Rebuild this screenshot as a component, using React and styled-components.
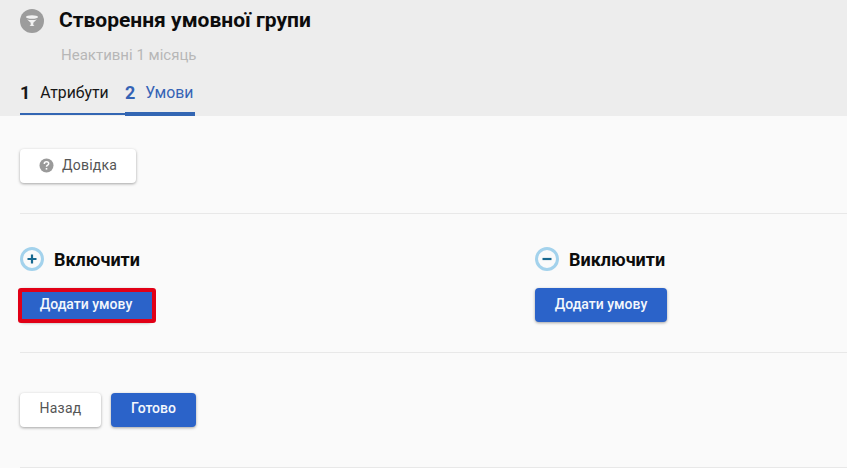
import React from 'react';
import styled, { createGlobalStyle } from 'styled-components';

const Global = createGlobalStyle`
  html, body {
    margin: 0;
    padding: 0;
    background: #fafafa;
    font-family: Roboto, "Liberation Sans", sans-serif;
  }
`;

const Page = styled.div`
  width: 847px;
  height: 468px;
  overflow: hidden;
  background: #fafafa;
`;

const Header = styled.header`
  height: 116px;
  box-sizing: border-box;
  padding: 7px 20px 0;
  background: #ededed;
`;

const TitleRow = styled.div`
  display: flex;
  align-items: center;
  height: 26px;
  gap: 15px;
`;

const RoundIcon = styled.span`
  width: 24px;
  height: 24px;
  margin-top: 1px;
  border-radius: 50%;
  background: #9c9c9c;
  display: flex;
  align-items: center;
  justify-content: center;
`;

const Title = styled.h1`
  margin: 0;
  font-size: 21px;
  line-height: 26px;
  font-weight: 700;
  color: #0c0c0c;
`;

const Subtitle = styled.div`
  margin: 14px 0 0 41px;
  font-size: 15px;
  line-height: 17px;
  color: #b7b7b7;
`;

const Tabs = styled.nav`
  display: flex;
  align-items: flex-start;
  margin-top: 12px;
`;

const Tab = styled.div`
  display: flex;
  align-items: center;
  box-sizing: border-box;
  height: ${p => (p.$active ? '40px' : '39px')};
  padding-bottom: ${p => (p.$active ? '4px' : '5px')};
  width: ${p => (p.$active ? '70px' : '105px')};
  gap: 10px;
  color: ${p => (p.$active ? '#3563b5' : '#171717')};
  border-bottom: ${p => (p.$active ? '4px' : '2px')} solid #3366b3;
`;

const TabNumber = styled.span`
  font-size: 18px;
  font-weight: 700;
`;

const TabLabel = styled.span`
  font-size: 15.8px;
`;

const Content = styled.main`
  padding: 33px 0 0 20px;
`;

const Button = styled.button`
  box-sizing: border-box;
  height: 34px;
  width: ${p => p.$width}px;
  padding: 0 0 2px;
  border: none;
  border-radius: 4px;
  display: inline-flex;
  align-items: center;
  justify-content: center;
  gap: 8px;
  font-family: inherit;
  font-size: 14px;
  font-weight: ${p => (p.$primary ? 500 : 400)};
  letter-spacing: ${p => (p.$primary ? '0' : '0.2px')};
  background: ${p => (p.$primary ? '#2b63c9' : '#ffffff')};
  color: ${p => (p.$primary ? '#f4f7fc' : '#555555')};
  box-shadow: 0 1px 3px rgba(0, 0, 0, 0.35);
`;

const Divider = styled.hr`
  margin: ${p => p.$top}px 0 0;
  border: none;
  border-top: 1px solid #e8e8e8;
`;

const Conditions = styled.section`
  display: grid;
  grid-template-columns: 515px 1fr;
  padding-top: 32px;
`;

const Column = styled.div`
  display: flex;
  flex-direction: column;
  align-items: flex-start;
  gap: 16px;
`;

const ColumnHead = styled.div`
  display: flex;
  align-items: center;
  gap: 10px;
  height: 26px;
`;

const SignIcon = styled.span`
  width: 24px;
  height: 24px;
  display: flex;
`;

const ColumnTitle = styled.h2`
  margin: 0;
  font-size: 18px;
  font-weight: 700;
  color: #0c0c0c;
`;

const Marked = styled.div`
  position: relative;
  display: flex;
  &::after {
    content: '';
    position: absolute;
    inset: 0 -4px -1px -2px;
    border: 4px solid #e10016;
    border-radius: 3px;
    pointer-events: none;
  }
`;

const Footer = styled.div`
  display: flex;
  gap: 10px;
  padding-top: 40px;

  ${Button} {
    padding-bottom: 4px;
  }
`;

const Funnel = () => (
  <svg width="14" height="14" viewBox="0 0 14 14" fill="#f1f1f1">
    <ellipse cx="7" cy="3" rx="6" ry="1.700" />
    <path d="M2 5.300C3.400 5.900 5.200 6.100 7 6.100s3.600-.2 5-.8L8.300 8.800v2.200l1.200 1H4.500l1.200-1V8.800z" />
  </svg>
);

const Sign = ({ minus }) => (
  <svg width="24" height="24" viewBox="0 0 24 24" fill="none">
    <circle cx="12" cy="12" r="10.500" stroke="#a3d2ec" strokeWidth="3" fill="#fafafa" />
    <path d={minus ? 'M7.500 12h9' : 'M7.500 12h9M12 7.500v9'} stroke="#17688f" strokeWidth="2.200" />
  </svg>
);

const Help = () => (
  <svg width="15" height="15" viewBox="0 0 15 15">
    <circle cx="7.500" cy="7.500" r="7" fill="#9a9a9a" />
    <path d="M5.300 5.900c0-1.300 1-2.100 2.200-2.100s2.200.8 2.200 1.900c0 1.500-2.200 1.500-2.200 3.100" stroke="#fff" strokeWidth="1.500" fill="none" />
    <rect x="6.700" y="10" width="1.600" height="1.600" fill="#fff" />
  </svg>
);

export default function App() {
  return (
    <Page>
      <Global />
      <Header>
        <TitleRow>
          <RoundIcon><Funnel /></RoundIcon>
          <Title>Створення умовної групи</Title>
        </TitleRow>
        <Subtitle>Неактивні 1 місяць</Subtitle>
        <Tabs>
          <Tab>
            <TabNumber>1</TabNumber>
            <TabLabel>Атрибути</TabLabel>
          </Tab>
          <Tab $active>
            <TabNumber>2</TabNumber>
            <TabLabel>Умови</TabLabel>
          </Tab>
        </Tabs>
      </Header>
      <Content>
        <Button $width={116}><Help />Довідка</Button>
        <Divider $top={30} />
        <Conditions>
          <Column>
            <ColumnHead>
              <SignIcon><Sign /></SignIcon>
              <ColumnTitle>Включити</ColumnTitle>
            </ColumnHead>
            <Marked><Button $primary $width={132}>Додати умову</Button></Marked>
          </Column>
          <Column>
            <ColumnHead>
              <SignIcon><Sign minus /></SignIcon>
              <ColumnTitle>Виключити</ColumnTitle>
            </ColumnHead>
            <Button $primary $width={132}>Додати умову</Button>
          </Column>
        </Conditions>
        <Divider $top={30} />
        <Footer>
          <Button $width={81}>Назад</Button>
          <Button $primary $width={85}>Готово</Button>
        </Footer>
        <Divider $top={40} />
      </Content>
    </Page>
  );
}
